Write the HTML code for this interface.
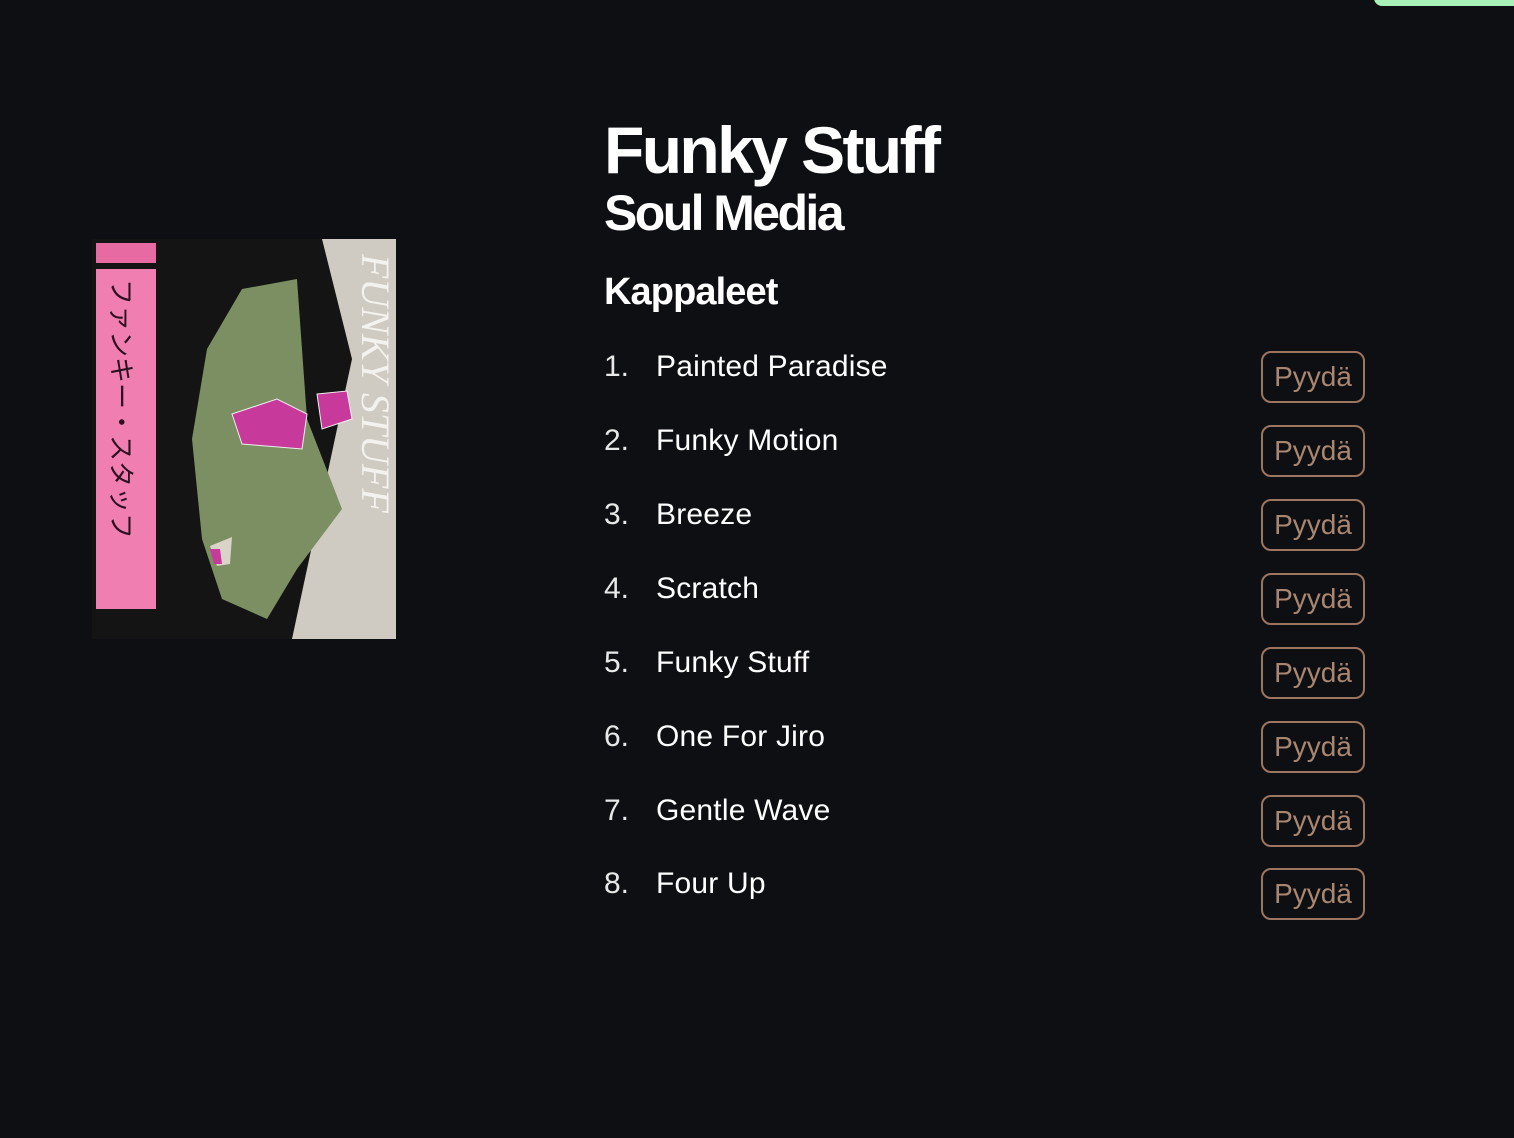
<!DOCTYPE html>
<html><head><meta charset="utf-8"><style>
html,body{margin:0;padding:0;background:#0e0f13;width:1514px;height:1138px;overflow:hidden;font-family:"Liberation Sans","Noto Sans CJK JP",sans-serif;color:#fff}
.bar{position:absolute;left:1374px;top:-10px;width:160px;height:16px;background:#a7f0b8;border-radius:10px}
h1,h2,h3{margin:0;position:absolute;left:604px;font-weight:bold;white-space:nowrap}
h1{top:112px;font-size:66px;letter-spacing:-2.6px;line-height:76px}
h2{top:184px;font-size:50px;letter-spacing:-2.6px;line-height:58px}
h3{top:270px;font-size:38px;letter-spacing:-0.9px;line-height:44px}
.row{position:absolute;left:604px;width:762px;height:52px}
.num{position:absolute;left:0;top:0;font-size:30px;line-height:30px;font-weight:300;color:#e8e8e8}
.name{position:absolute;left:52px;top:0;font-size:30px;line-height:30px;letter-spacing:0.2px}
.btn{position:absolute;left:657px;top:-1px;width:100px;height:48px;border:2px solid #9c7560;border-radius:10px;color:#a98670;font-size:28px;line-height:48px;text-align:center}
</style></head><body>
<div class="bar"></div>
<svg style="position:absolute;left:92px;top:239px" width="304" height="400" viewBox="0 0 304 400">
<rect width="304" height="400" fill="#141414"/>
<polygon points="230,0 304,0 304,400 200,400 260,120" fill="#cfcbc2"/>
<polygon points="150,50 205,40 215,180 250,270 205,330 175,380 130,360 110,300 100,200 115,110" fill="#7b8f62"/>
<polygon points="140,175 185,160 215,175 210,210 150,205" fill="#c73a9c" stroke="#eee" stroke-width="1"/>
<polygon points="225,155 255,152 260,180 230,190" fill="#c73a9c" stroke="#eee" stroke-width="1"/>
<polygon points="118,307 140,298 138,325 125,327" fill="#d9d3c8"/>
<polygon points="118,310 128,310 130,325 122,325" fill="#c73a9c"/>
<rect x="4" y="4" width="60" height="20" fill="#e86aa3"/>
<rect x="4" y="30" width="60" height="340" fill="#f07eb0"/>
<text x="20" y="40" transform="rotate(90 20 40)" font-size="26" fill="#2a1020" font-family="Noto Sans CJK JP, sans-serif">ファンキー・スタッフ</text>
<text x="270" y="15" transform="rotate(90 270 15)" font-size="40" fill="#f4f2ee" font-family="Liberation Serif, serif" font-style="italic">FUNKY STUFF</text>
</svg>
<h1>Funky Stuff</h1>
<h2>Soul Media</h2>
<h3>Kappaleet</h3>
<div class="row" style="top:352px"><span class="num">1.</span><span class="name">Painted Paradise</span><span class="btn">Pyydä</span></div>
<div class="row" style="top:426px"><span class="num">2.</span><span class="name">Funky Motion</span><span class="btn">Pyydä</span></div>
<div class="row" style="top:500px"><span class="num">3.</span><span class="name">Breeze</span><span class="btn">Pyydä</span></div>
<div class="row" style="top:574px"><span class="num">4.</span><span class="name">Scratch</span><span class="btn">Pyydä</span></div>
<div class="row" style="top:648px"><span class="num">5.</span><span class="name">Funky Stuff</span><span class="btn">Pyydä</span></div>
<div class="row" style="top:722px"><span class="num">6.</span><span class="name">One For Jiro</span><span class="btn">Pyydä</span></div>
<div class="row" style="top:796px"><span class="num">7.</span><span class="name">Gentle Wave</span><span class="btn">Pyydä</span></div>
<div class="row" style="top:869px"><span class="num">8.</span><span class="name">Four Up</span><span class="btn">Pyydä</span></div>
</body></html>
